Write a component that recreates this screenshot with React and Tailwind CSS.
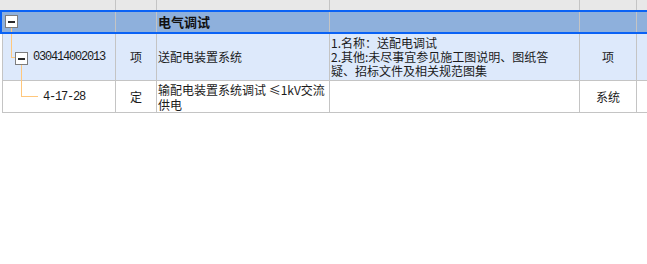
import React from "react";

const line = "border-[#c4c4c4]";
const tree = "bg-[#ffc77c]";

const MinusBox = ({ className = "" }) => (
  <span
    className={`flex h-[13px] w-[13px] items-center justify-center border border-[#7d7d7d] bg-white ${className}`}
  >
    <span className="h-[2px] w-[7px] bg-[#2a2a2a]" />
  </span>
);

const App = () => {
  const rows = [
    {
      code: "030414002013",
      unit: "项",
      name: "送配电装置系统",
      desc: ["1.名称：送配电调试", "2.其他:未尽事宜参见施工图说明、图纸答", "疑、招标文件及相关规范图集"],
      measure: "项",
    },
    {
      code: "4-17-28",
      unit: "定",
      name: ["输配电装置系统调试 ≤1kV交流", "供电"],
      desc: [],
      measure: "系统",
    },
  ];

  return (
    <div className="h-[264px] w-[647px] overflow-hidden bg-white font-['Noto_Sans_CJK_SC',sans-serif] text-[12px] text-[#1b1b1b]">
      <div className="w-[720px]">
        {/* column header strip (cut off at top) */}
        <div className="flex h-[10px] bg-[#e8e8e8]">
          <div className={`w-[116px] border-r ${line}`} />
          <div className={`w-[41px] border-r ${line}`} />
          <div className={`w-[173px] border-r ${line}`} />
          <div className={`w-[250px] border-r ${line}`} />
          <div className={`w-[57px] border-r ${line}`} />
          <div className="flex-1" />
        </div>

        {/* selected group row */}
        <div className="flex h-[24px] border-2 border-[#0a62f5] bg-[#8eb0dc]">
          <div className={`relative w-[114px] border-r ${line} pl-[3px] pt-[3px]`}>
            <MinusBox />
            <span className={`absolute left-[9px] top-[16px] bottom-0 w-px ${tree}`} />
          </div>
          <div className={`w-[41px] border-r ${line}`} />
          <div className={`flex w-[173px] items-center border-r ${line} pl-[1px] text-[13px] font-bold text-[#111]`}>
            电气调试
          </div>
          <div className={`w-[250px] border-r ${line}`} />
          <div className={`w-[57px] border-r ${line}`} />
          <div className="flex-1" />
        </div>

        {/* data rows */}
        <div className={`ml-[2px] border-l ${line}`}>
          {/* row: 清单项 */}
          <div className={`flex h-[47px] border-b ${line} bg-[#dde9fb]`}>
            <div className={`relative flex w-[113px] items-center border-r ${line} pl-[30px]`}>
              <span className={`absolute left-[8px] top-0 h-[24px] w-px ${tree}`} />
              <span className={`absolute left-[8px] top-[23px] h-px w-[4px] ${tree}`} />
              <MinusBox className="absolute left-[12px] top-[18px]" />
              <span className={`absolute left-[18px] top-[31px] bottom-[-1px] w-px ${tree}`} />
              <span className="font-['Liberation_Mono',monospace] text-[12px] tracking-[-1.2px]">
                {rows[0].code}
              </span>
            </div>
            <div className={`flex w-[41px] items-center justify-center border-r ${line}`}>
              {rows[0].unit}
            </div>
            <div className={`flex w-[173px] items-center border-r ${line} pl-[1px]`}>
              {rows[0].name}
            </div>
            <div className={`w-[250px] border-r ${line} pl-[1px] pt-[2px] leading-[14px]`}>
              {rows[0].desc.map((t) => (
                <div key={t} className="whitespace-nowrap">
                  {t}
                </div>
              ))}
            </div>
            <div className={`flex w-[57px] items-center justify-center border-r ${line}`}>
              {rows[0].measure}
            </div>
            <div className="flex-1" />
          </div>

          {/* row: 定额子目 */}
          <div className={`flex h-[32px] border-b ${line} bg-white`}>
            <div className={`relative flex w-[113px] items-center border-r ${line} pl-[40px]`}>
              <span className={`absolute left-[18px] top-0 h-[16px] w-px ${tree}`} />
              <span className={`absolute left-[18px] top-[15px] h-px w-[17px] ${tree}`} />
              <span className="font-['Liberation_Mono',monospace] text-[12px] tracking-[-1.2px]">
                {rows[1].code}
              </span>
            </div>
            <div className={`flex w-[41px] items-center justify-center border-r ${line}`}>
              {rows[1].unit}
            </div>
            <div className={`w-[173px] border-r ${line} pl-[1px] pt-[1px] leading-[15px]`}>
              {rows[1].name.map((t) => (
                <div key={t} className="whitespace-nowrap">
                  {t}
                </div>
              ))}
            </div>
            <div className={`w-[250px] border-r ${line}`} />
            <div className={`flex w-[57px] items-center justify-center border-r ${line}`}>
              {rows[1].measure}
            </div>
            <div className="flex-1" />
          </div>
        </div>
      </div>
    </div>
  );
};

export default App;
